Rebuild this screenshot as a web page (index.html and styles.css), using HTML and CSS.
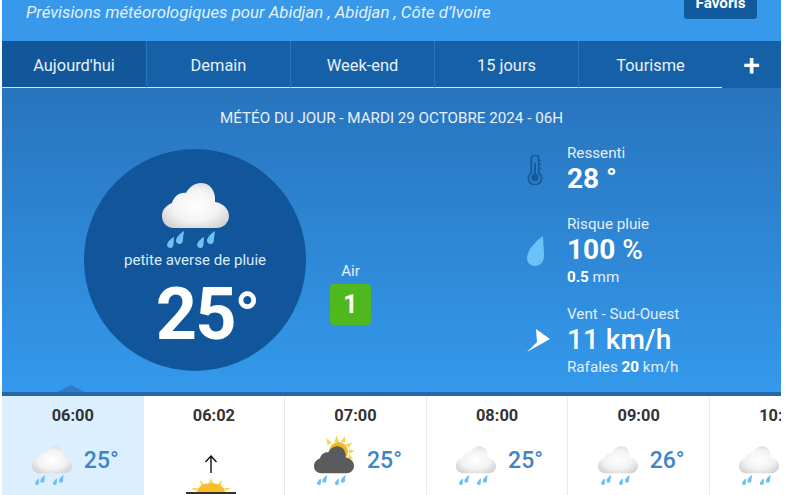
FILE: index.html
```html
<!DOCTYPE html>
<html lang="fr">
<head>
  <meta charset="UTF-8">
  <title>Météo Abidjan</title>
  <link rel="stylesheet" href="styles.css">
</head>
<body>

<svg class="defs" aria-hidden="true">
  <defs>
    <radialGradient id="cloudFill" cx="50%" cy="50%" r="60%">
      <stop offset="0%" stop-color="#ffffff"/>
      <stop offset="60%" stop-color="#f2f2f2"/>
      <stop offset="100%" stop-color="#d2d2d2"/>
    </radialGradient>
    <path id="cloudShape" d="M12 45C4 45 0 39 0 33C0 26 5 22 10 20C12 13 18 9 24 10C27 4 33 0 39 0C47 0 52 6 53 14L53 19C61 20 67 26 67 33C67 40 61 45 55 45Z"/>
    <g id="rain" fill="#6ec1f0">
      <path d="M12 54C8 56 5 60 5 62C5 64 7 65 8.5 65C10.5 65 11.5 63 11.5 61C11.5 58 12 56 12 54Z"/>
      <path d="M22 48C17 51 14 55 14 58C14 60 16 61 17.5 61C20 61 21 59 21 56C21 53 22 51 22 48Z"/>
      <path d="M42 54C38 56 35 60 35 62C35 64 37 65 38.5 65C40.5 65 41.5 63 41.5 61C41.5 58 42 56 42 54Z"/>
      <path d="M53 48C48 51 45 55 45 58C45 60 47 61 48.5 61C51 61 52 59 52 56C52 53 53 51 53 48Z"/>
    </g>
    <symbol id="rainCloud" viewBox="0 0 67 66">
      <use href="#cloudShape" fill="url(#cloudFill)"/>
      <use href="#rain"/>
    </symbol>
    <symbol id="sunCloud" viewBox="0 0 67 86">
      <g transform="translate(0 20)">
        <g fill="#f5d44e">
          <path d="M38 -18L42 -7L34 -7Z"/>
          <path d="M20 -14L30 -6L23 -2Z"/>
          <path d="M52 -17L52 -6L45 -8Z"/>
          <path d="M64 -6L58 3L52 -3Z"/>
          <path d="M69 8L59 12L58 5Z"/>
          <path d="M66 22L56 20L59 13Z"/>
        </g>
        <circle cx="41" cy="9" r="16" fill="#f5b91f"/>
        <use href="#cloudShape" fill="#5b5b5e"/>
        <use href="#rain"/>
      </g>
    </symbol>
  </defs>
</svg>

<div class="page">
  <header class="top">
    <p class="top-title">Prévisions météorologiques pour Abidjan , Abidjan , Côte d’Ivoire</p>
    <button class="fav-btn">Favoris</button>
  </header>

  <nav class="tabs">
    <a class="tab active">Aujourd'hui</a>
    <a class="tab">Demain</a>
    <a class="tab">Week-end</a>
    <a class="tab">15 jours</a>
    <a class="tab">Tourisme</a>
    <a class="tab-more">+</a>
  </nav>

  <section class="today">
    <h1 class="today-title">MÉTÉO DU JOUR - MARDI 29 OCTOBRE 2024 - 06H</h1>
    <div class="today-row">
      <div class="circle">
        <svg class="circle-icon"><use href="#rainCloud"/></svg>
        <div class="circle-label">petite averse de pluie</div>
        <div class="circle-temp">25<span class="deg">°</span></div>
      </div>

      <div class="air">
        <div class="air-label">Air</div>
        <div class="air-box">1</div>
      </div>

      <div class="stats">
        <div class="stat">
          <div class="stat-icon">
            <svg width="16" height="30" viewBox="0 0 16 32" fill="none" stroke="#155a9c" stroke-width="2">
              <path d="M4 19V4a4 4 0 0 1 8 0V19a7 7 0 1 1-8 0Z"/>
              <circle cx="8" cy="24" r="3" fill="#155a9c"/>
              <path d="M8 8V22" />
              <path d="M12 6h3M12 10h3M12 14h3" stroke-width="1"/>
            </svg>
          </div>
          <div>
            <div class="stat-label">Ressenti</div>
            <div class="stat-value">28 °</div>
          </div>
        </div>
        <div class="stat">
          <div class="stat-icon">
            <svg width="17" height="30" viewBox="0 0 17 30">
              <path d="M16 0C16 4 17 12 17 20C17 26 13 30 8 30C3 30 0 26 0 22C0 14 9 5 16 0Z" fill="#6cc2f8"/>
            </svg>
          </div>
          <div>
            <div class="stat-label">Risque pluie</div>
            <div class="stat-value">100 <span class="unit">%</span></div>
            <div class="stat-label sub"><b>0.5</b> mm</div>
          </div>
        </div>
        <div class="stat">
          <div class="stat-icon">
            <svg width="24" height="24" viewBox="0 0 24 24">
              <path d="M9 0L23 10L0 23L10 13Z" fill="#fff"/>
            </svg>
          </div>
          <div>
            <div class="stat-label">Vent - Sud-Ouest</div>
            <div class="stat-value wind">11 km/h</div>
            <div class="stat-label sub">Rafales <b>20</b> km/h</div>
          </div>
        </div>
      </div>
    </div>
    <span class="notch"></span>
  </section>

  <div class="hours">
    <div class="hour current">
      <div class="hour-time">06:00</div>
      <div class="hour-row">
        <svg class="hour-icon"><use href="#rainCloud"/></svg>
        <span class="hour-temp">25°</span>
      </div>
    </div>
    <div class="hour">
      <div class="hour-time">06:02</div>
      <div class="sunrise">
        <svg width="14" height="18" viewBox="0 0 14 18" fill="none" stroke="#111" stroke-width="1.4">
          <path d="M7 18V1M1.5 7L7 1L12.5 7"/>
        </svg>
        <svg class="sunrise-sun" width="52" height="16" viewBox="0 0 52 16">
          <g fill="#f7d65a">
            <path d="M26 0L28 5H24Z"/>
            <path d="M15 2L20 7L16 8Z"/>
            <path d="M37 2L32 7L36 8Z"/>
            <path d="M6 10L13 10L11 13Z"/>
            <path d="M46 10L39 10L41 13Z"/>
          </g>
          <path d="M12 14A14 9 0 0 1 40 14Z" fill="#f8bd27"/>
          <path d="M1 15H51" stroke="#333" stroke-width="2"/>
        </svg>
      </div>
    </div>
    <div class="hour">
      <div class="hour-time">07:00</div>
      <div class="hour-row sun-row">
        <svg class="hour-icon sun-icon"><use href="#sunCloud"/></svg>
        <span class="hour-temp">25°</span>
      </div>
    </div>
    <div class="hour">
      <div class="hour-time">08:00</div>
      <div class="hour-row">
        <svg class="hour-icon"><use href="#rainCloud"/></svg>
        <span class="hour-temp">25°</span>
      </div>
    </div>
    <div class="hour">
      <div class="hour-time">09:00</div>
      <div class="hour-row">
        <svg class="hour-icon"><use href="#rainCloud"/></svg>
        <span class="hour-temp">26°</span>
      </div>
    </div>
    <div class="hour">
      <div class="hour-time">10:00</div>
      <div class="hour-row">
        <svg class="hour-icon"><use href="#rainCloud"/></svg>
        <span class="hour-temp">26°</span>
      </div>
    </div>
  </div>
</div>

</body>
</html>
```

FILE: styles.css
```css
html, body {
  margin: 0;
  height: 495px;
  overflow: hidden;
  background: #fff;
  font-family: Roboto, "Liberation Sans", sans-serif;
}
.defs {
  display: block;
  width: 0;
  height: 0;
}
.page {
  width: 779px;
  margin-left: 2px;
}

/* header */
.top {
  height: 41px;
  display: flex;
  justify-content: space-between;
  background: #3898ea;
  padding: 0 24px;
  box-sizing: border-box;
}
.top-title {
  margin: 2px 0 0;
  font-size: 16.8px;
  line-height: 20px;
  font-style: italic;
  color: #e4f1fc;
}
.fav-btn {
  width: 73px;
  height: 30px;
  margin-top: -11px;
  padding: 0 0 3px;
  border: 0;
  border-radius: 3px;
  background: #125a9e;
  color: #fff;
  font: 700 15.3px Roboto, sans-serif;
}

/* tabs */
.tabs {
  display: flex;
  height: 47px;
  background: #1560a6;
}
.tab {
  width: 144px;
  box-sizing: border-box;
  text-align: center;
  font-size: 16.4px;
  line-height: 49px;
  color: #e8f2fb;
  border-right: 1px solid #2a74ba;
  border-bottom: 1px solid #d5e6f5;
}
.tab.active {
  width: 145px;
  background: #115799;
}
.tab:nth-child(5) {
  border-right: 0;
  width: 143px;
}
.tab-more {
  flex: 1;
  text-align: center;
  font-size: 30px;
  font-weight: 500;
  line-height: 48px;
  color: #fff;
}

/* today */
.today {
  position: relative;
  height: 304px;
  border-bottom: 4px solid #2468a9;
  background: linear-gradient(#2874bd, #3499ec);
}
.today-title {
  margin: 0;
  padding-top: 20px;
  font-size: 15.2px;
  font-weight: 400;
  line-height: 20px;
  text-align: center;
  color: #e6f1fb;
}
.today-row {
  display: flex;
  align-items: flex-start;
  margin-top: 15px;
  padding-left: 82px;
}
.circle {
  width: 222px;
  height: 222px;
  margin-top: 6px;
  border-radius: 50%;
  background: #11569a;
  display: flex;
  flex-direction: column;
  align-items: center;
  color: #fff;
}
.circle-icon {
  width: 67px;
  height: 66px;
  margin-top: 34px;
}
.circle-label {
  margin-top: 1px;
  font-size: 15.1px;
  line-height: 20px;
  color: #dcebf8;
}
.circle-temp {
  padding-left: 24px;
  font-size: 72px;
  font-weight: 700;
  line-height: 84px;
  letter-spacing: -2px;
  margin-top: 3px;
}
.deg {
  font-size: 66px;
}
.air {
  width: 41px;
  margin: 118px 0 0 24px;
  text-align: center;
  color: #e6f1fb;
}
.air-label {
  font-size: 15px;
  line-height: 18px;
  margin-bottom: 5px;
  padding-top: 1px;
}
.air-box {
  height: 41px;
  margin-top: -1px;
  border-radius: 4px;
  background: #4fb81e;
  font-size: 25px;
  font-weight: 700;
  line-height: 41px;
  color: #fff;
}
.stats {
  margin-left: 154px;
  margin-top: 1px;
  display: flex;
  flex-direction: column;
  gap: 19px;
}
.stat {
  display: flex;
  align-items: center;
}
.stat-icon {
  width: 42px;
  padding-left: 2px;
  box-sizing: border-box;
  display: flex;
}
.stat-icon svg {
  display: block;
}
.stat-label {
  font-size: 15.2px;
  line-height: 18px;
  color: #e2eefa;
}
.stat-label.sub {
  margin-top: 1px;
}
.stat-label b {
  font-weight: 700;
  color: #fff;
}
.stat-value {
  font-size: 28px;
  font-weight: 700;
  line-height: 34px;
  color: #fff;
}
.stat-value.wind,
.unit {
  font-weight: 500;
}
.notch {
  position: absolute;
  left: 55px;
  bottom: 0;
  border-left: 14px solid transparent;
  border-right: 14px solid transparent;
  border-bottom: 7px solid #2f7cc4;
}

/* hourly strip */
.hours {
  display: flex;
  height: 99px;
  overflow: hidden;
}
.hour {
  flex: 0 0 141.6px;
  box-sizing: border-box;
  border-right: 1px solid #e8ecf0;
  text-align: center;
}
.hour.current {
  background: #dcefff;
  border-right: 0;
}
.hour-time {
  padding-top: 11px;
  font-size: 16.4px;
  font-weight: 700;
  line-height: 18px;
  color: #333;
}
.hour-row {
  display: flex;
  align-items: flex-start;
  justify-content: center;
  gap: 12px;
  margin-top: 21px;
  padding-left: 5px;
}
.hour-icon {
  width: 40px;
  height: 40px;
  display: block;
}
.hour-temp {
  font-size: 23px;
  font-weight: 500;
  line-height: 29px;
  color: #3f85c4;
}
.sun-row {
  margin-top: 9px;
  gap: 13px;
}
.sun-icon {
  height: 52px;
}
.sun-row .hour-temp {
  margin-top: 12px;
}
.sunrise {
  display: flex;
  flex-direction: column;
  align-items: center;
  margin: 30px 6px 0 0;
}
.sunrise svg {
  display: block;
}
.sunrise-sun {
  margin-top: 5px;
}
```
